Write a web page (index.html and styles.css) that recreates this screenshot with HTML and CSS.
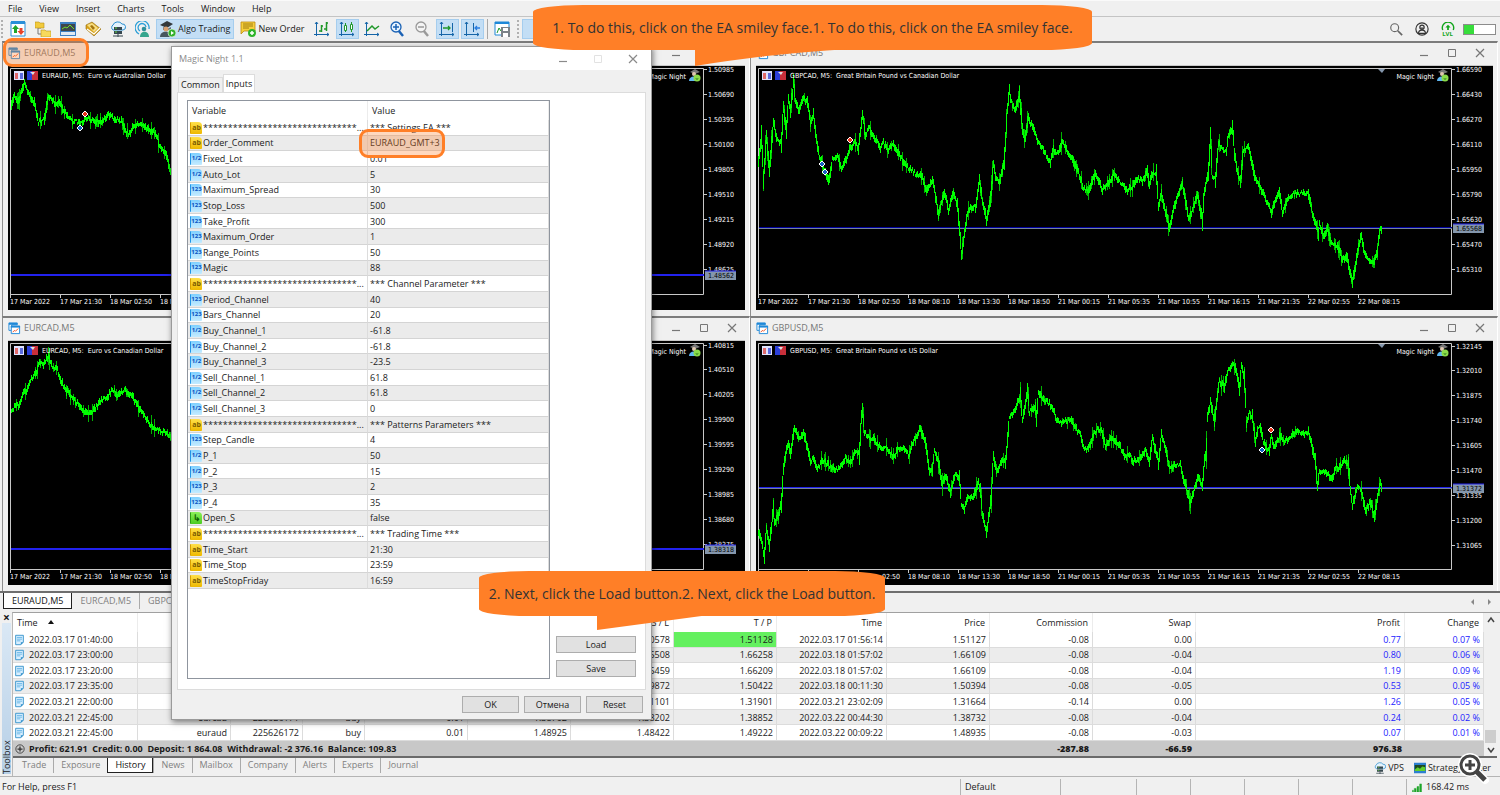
FILE: index.html
```html
<!DOCTYPE html>
<html lang="en">
<head>
    <meta charset="UTF-8">
    <meta name="viewport" content="width=device-width, initial-scale=1.0">
    <title>Magic Night 1.1</title>
    <link rel="stylesheet" href="styles.css">
</head>
<body>
    <!-- Shared icons -->
    <svg class="sprite" aria-hidden="true">
        <symbol id="i-window" viewBox="0 0 14 14">
            <path d="M1 1h9v2H4v6H1z" fill="#fff" stroke="#1e88d8"/><path d="M1 1h9v2H1z" fill="#1e88d8"/>
            <path d="M3.500 4.500h9v8h-9z" fill="#fff" stroke="#1e88d8"/><path d="M3 4h10v2H3z" fill="#1e88d8"/>
            <path d="M5 11l2-2 1 1 3-3" fill="none" stroke="#f04a1a"/>
        </symbol>
        <symbol id="i-market" viewBox="0 0 16 16">
            <path d="M1 1h14v14H1z" fill="#fff" stroke="#2a8fd8"/><path d="M1 0h14v3H1z" fill="#2a8fd8"/>
            <path d="M5.500 4l3.500 4H7v4H4V8H2z" fill="#1fa52a"/><path d="M11 14l-3.500-4h2V7h3v3h2z" fill="#e8432a"/>
        </symbol>
        <symbol id="i-folders" viewBox="0 0 16 16">
            <path d="M3 6v7h4M3 7h3" fill="none" stroke="#777"/>
            <path d="M0 1h4l1 1h4v5H0z" fill="#f2cb3c" stroke="#b8901a" stroke-width=".6"/>
            <path d="M6 9h4l1 1h5v6H6z" fill="#f7d95c" stroke="#b8901a" stroke-width=".6"/>
        </symbol>
        <symbol id="i-terminal" viewBox="0 0 16 16">
            <path d="M0 1h16v14H0z" fill="#3c80c4"/><path d="M1 3h14v7H1z" fill="#3e464c"/>
            <path d="M2 8l3-2 2 1 3-3 4 4" fill="none" stroke="#6fdc2a"/><path d="M1 11h14v3H1z" fill="#dfe9f2"/>
        </symbol>
        <symbol id="i-strategy" viewBox="0 0 16 16">
            <path d="M0 1h16v14H0z" fill="#2d7fd0"/><path d="M1 4h14v8H1z" fill="#1d4a20"/>
            <path d="M1 10l4-3 3 2 3-3 4 1v5H1z" fill="#5fd02a"/>
        </symbol>
        <symbol id="i-tester" viewBox="0 0 16 16">
            <path d="M1 4l6-3 5 4 4 3-7 7L1 8z" fill="#d7a21c" stroke="#94690c" stroke-width=".6"/>
            <path d="M2 4l5-2 6 5-4 4z" fill="#f7de82"/><path d="M5 5l2-1 3 3-2 2z" fill="#a5740d"/>
            <path d="M2 8l7 5 6-6" fill="none" stroke="#fff" stroke-width="1.200"/>
        </symbol>
        <symbol id="i-cloud" viewBox="0 0 16 16">
            <path d="M3 9a3 3 0 0 1 0-5 5 4.500 0 0 1 9-1 3 3 0 0 1 1 6z" fill="#e4f3fd" stroke="#2b8fd0"/>
            <path d="M4 6h8v3H4zM4 10h8v3H4z" fill="#36474f"/><path d="M8 13v3M3 15h10" stroke="#36474f"/>
            <path d="M5 7h2M5 11h2" stroke="#64d641"/>
        </symbol>
        <symbol id="i-signal" viewBox="0 0 16 16">
            <path d="M4 13A7 7 0 1 1 14 8M5 10a4 4 0 1 1 6-4" fill="none" stroke="#2a9fd8" stroke-width="1.300"/>
            <circle cx="9" cy="8" r="2.300" fill="#2f8f9a"/><path d="M5 16c0-7 9-7 9 0z" fill="#36a68d"/>
        </symbol>
        <symbol id="i-algo" viewBox="0 0 16 16">
            <path d="M0 4l7-4 6 3-6 4z" fill="#33383b"/><path d="M3 6l4 2 4-2v3H3z" fill="#667078"/>
            <circle cx="6" cy="8" r="2.500" fill="#d9a071"/><path d="M0 16c0-7 11-7 12 0z" fill="#46565f"/>
            <circle cx="12" cy="12" r="4" fill="#32b02d" stroke="#fff" stroke-width=".6"/><path d="M11 10v4l3-2z" fill="#fff"/>
        </symbol>
        <symbol id="i-order" viewBox="0 0 16 16">
            <path d="M1 1h14v9H4l-3 3z" fill="#f6ce3a" stroke="#bb8b12" stroke-width=".8"/>
            <path d="M3 3h10M3 5h10M3 7h6" stroke="#8d6a08" stroke-width=".8"/>
            <circle cx="12" cy="12" r="4" fill="#2eb52b"/><path d="M12 10v4M10 12h4" stroke="#fff" stroke-width="1.500"/>
        </symbol>
        <symbol id="i-bars" viewBox="0 0 16 16">
            <path d="M2.500 1v14M0 13.500h15M1 3l1.500-2L4 3M13 12l2 1.500-2 1.500" fill="none" stroke="#1565a8"/>
            <path d="M7.500 4v7M5 10h2M7 5h2M12.500 1v9M10 8h2M12 2h2" fill="none" stroke="#20982a" stroke-width="1.500"/>
        </symbol>
        <symbol id="i-candles" viewBox="0 0 16 16">
            <path d="M2.500 1v14M0 13.500h15M1 3l1.500-2L4 3M13 12l2 1.500-2 1.500" fill="none" stroke="#1565a8"/>
            <path d="M5.500 4.500h2v5h-2zM11.500 3.500h2v5h-2zM6.500 2v2M6.500 10v1M12.500 1v2M12.500 9v2" fill="#fff" stroke="#20982a"/>
        </symbol>
        <symbol id="i-line" viewBox="0 0 16 16">
            <path d="M2.500 1v14M0 13.500h15M1 3l1.500-2L4 3M13 12l2 1.500-2 1.500" fill="none" stroke="#1565a8"/>
            <path d="M3 10l5-5 3 3 4-3" fill="none" stroke="#20982a" stroke-width="1.500"/>
        </symbol>
        <symbol id="i-zoomin" viewBox="0 0 16 16">
            <path d="M9 9l5 6" stroke="#1b62b5" stroke-width="2.500"/><circle cx="7" cy="6" r="5" fill="#e8f4ff" stroke="#1b62b5" stroke-width="1.300"/>
            <path d="M7 3v6M4 6h6" stroke="#1b62b5" stroke-width="1.500"/>
        </symbol>
        <symbol id="i-zoomout" viewBox="0 0 16 16">
            <path d="M9 9l5 6" stroke="#999" stroke-width="2.500"/><circle cx="7" cy="6" r="5" fill="#f4f4f4" stroke="#999" stroke-width="1.300"/>
            <path d="M4 6h6" stroke="#999" stroke-width="1.500"/>
        </symbol>
        <symbol id="i-scroll" viewBox="0 0 16 16">
            <path d="M2.500 1v14M0 13.500h15M1 3l1.500-2L4 3M13 12l2 1.500-2 1.500" fill="none" stroke="#1565a8"/>
            <path d="M4 7h7M9 5l2 2-2 2" fill="none" stroke="#20982a" stroke-width="1.300"/><path d="M13.500 2v9" stroke="#1565a8"/>
        </symbol>
        <symbol id="i-shift" viewBox="0 0 16 16">
            <path d="M2.500 1v14M0 13.500h15M1 3l1.500-2L4 3M13 12l2 1.500-2 1.500M9.500 2v9" fill="none" stroke="#1565a8"/>
            <path d="M16 7h-5M13 5l-2 2 2 2" fill="none" stroke="#2a7de0" stroke-width="1.300"/>
        </symbol>
        <symbol id="i-template" viewBox="0 0 16 16">
            <path d="M1 1h14v13H1z" fill="#fff" stroke="#1e88d8"/><path d="M1 1h14v2H1z" fill="#1e88d8"/>
            <path d="M3 12l2-5 2 3 2-4" fill="none" stroke="#20982a"/><path d="M7 6h9v10H7z" fill="#7b8288"/><path d="M9 7h5v3H9zM9 12h5v4H9z" fill="#fff"/>
        </symbol>
        <symbol id="i-search" viewBox="0 0 16 16">
            <circle cx="6.500" cy="6.500" r="4.500" fill="none" stroke="#666" stroke-width="1.300"/><path d="M10 10l5 5" stroke="#666" stroke-width="2"/>
        </symbol>
        <symbol id="i-user" viewBox="0 0 16 16">
            <circle cx="8" cy="8" r="7" fill="none" stroke="#333" stroke-width="1.300"/><circle cx="8" cy="6" r="2.500" fill="none" stroke="#333" stroke-width="1.300"/>
            <path d="M4 13c0-5 8-5 8 0zM6 7h4" fill="none" stroke="#333" stroke-width="1.300"/>
        </symbol>
        <symbol id="i-level" viewBox="0 0 16 10">
            <path d="M2 9a6.500 6.500 0 1 1 12 0" fill="none" stroke="#12a51c" stroke-width="1.600"/><path d="M8 3l3 3H9v3H7V6H5z" fill="#12a51c"/>
        </symbol>
        <symbol id="i-doc" viewBox="0 0 12 14">
            <path d="M1.500 1.500h9v8l-3 3h-6z" fill="#d9efff" stroke="#2a8cc8"/><path d="M3 4h6M3 6h6M3 8h4" stroke="#5db1e4"/><path d="M7.500 12.500v-3h3z" fill="#2a8cc8"/>
        </symbol>
        <symbol id="i-min" viewBox="0 0 10 10"><path d="M1 7.500h8" stroke="currentColor" stroke-width="1.200"/></symbol>
        <symbol id="i-max" viewBox="0 0 10 10"><path d="M1.500 1.500h7v7h-7z" fill="none" stroke="currentColor"/></symbol>
        <symbol id="i-close" viewBox="0 0 10 10"><path d="M1 1l8 8M9 1L1 9" stroke="currentColor" stroke-width="1.200"/></symbol>
        <symbol id="i-up" viewBox="0 0 10 10"><path d="M2 7l3-4 3 4" fill="none" stroke="#444" stroke-width="1.500"/></symbol>
        <symbol id="i-down" viewBox="0 0 10 10"><path d="M2 3l3 4 3-4" fill="none" stroke="#444" stroke-width="1.500"/></symbol>
    </svg>

    <!-- Menu -->
    <nav class="menu">
        <a href="#">File</a><a href="#">View</a><a href="#">Insert</a><a href="#">Charts</a><a href="#">Tools</a><a href="#">Window</a><a href="#">Help</a>
    </nav>

    <!-- Toolbar -->
    <div class="toolbar">
        <span class="grip"></span>
        <button class="tool" aria-label="Market Watch"><svg><use href="#i-market"/></svg></button>
        <button class="tool" aria-label="Navigator"><svg><use href="#i-folders"/></svg></button>
        <button class="tool" aria-label="Toolbox"><svg><use href="#i-terminal"/></svg></button>
        <button class="tool" aria-label="Market"><svg><use href="#i-tester"/></svg></button>
        <button class="tool" aria-label="Virtual Hosting"><svg><use href="#i-cloud"/></svg></button>
        <button class="tool" aria-label="Signals"><svg><use href="#i-signal"/></svg></button>
        <button class="tool wide on"><svg><use href="#i-algo"/></svg>Algo Trading</button>
        <button class="tool wide"><svg><use href="#i-order"/></svg>New Order</button>
        <button class="tool" aria-label="Bar chart"><svg><use href="#i-bars"/></svg></button>
        <button class="tool on" aria-label="Candlesticks"><svg><use href="#i-candles"/></svg></button>
        <button class="tool" aria-label="Line chart"><svg><use href="#i-line"/></svg></button>
        <button class="tool" aria-label="Zoom in"><svg><use href="#i-zoomin"/></svg></button>
        <button class="tool" aria-label="Zoom out"><svg><use href="#i-zoomout"/></svg></button>
        <button class="tool on" aria-label="Auto scroll"><svg><use href="#i-scroll"/></svg></button>
        <button class="tool on" aria-label="Chart shift"><svg><use href="#i-shift"/></svg></button>
        <span class="divider"></span>
        <button class="tool" aria-label="Templates"><svg><use href="#i-template"/></svg></button>
        <span class="grip"></span>
        <button class="tool on" aria-label="Cursor"></button>
        <div class="tools-right">
            <button class="tool" aria-label="Search"><svg><use href="#i-search"/></svg></button>
            <button class="tool" aria-label="Account"><svg><use href="#i-user"/></svg></button>
            <button class="tool level"><svg><use href="#i-level"/></svg>LVL</button>
            <span class="battery"><i></i></span>
        </div>
    </div>

    <!-- Chart windows -->
    <main class="charts" id="charts"></main>

    <div class="chart-tabs">
        <a href="#" class="active">EURAUD,M5</a><a href="#">EURCAD,M5</a><a href="#">GBPCAD,M5</a><a href="#">GBPUSD,M5</a>
        <span class="tab-arrows"><i class="prev"></i><i class="next"></i></span>
    </div>

    <!-- Toolbox -->
    <section class="toolbox">
        <div class="toolbox-side">
            <button aria-label="Close toolbox">×</button>
            <span>Toolbox</span>
        </div>
        <div class="toolbox-main">
            <div class="history">
                <div class="history-body">
                    <table class="deals">
                        <colgroup>
                            <col class="w-time"><col class="w-symbol"><col class="w-ticket"><col class="w-type"><col class="w-num"><col class="w-num"><col class="w-num"><col class="w-num"><col class="w-close"><col class="w-num"><col class="w-num"><col class="w-num"><col><col class="w-change">
                        </colgroup>
                        <thead>
                            <tr><th>Time <i class="sort"></i></th><th>Symbol</th><th>Ticket</th><th>Type</th><th>Volume</th><th>Price</th><th>S / L</th><th>T / P</th><th>Time</th><th>Price</th><th>Commission</th><th>Swap</th><th>Profit</th><th>Change</th></tr>
                        </thead>
                        <tbody id="deals"></tbody>
                    </table>
                    <div class="summary">
                        <svg viewBox="0 0 12 12"><circle cx="6" cy="6" r="5" fill="none" stroke="#333"/><path d="M6 3v6M3 6h6" stroke="#333" stroke-width="1.500"/></svg>
                        <span class="totals">Profit: 621.91&nbsp; Credit: 0.00&nbsp; Deposit: 1 864.08&nbsp; Withdrawal: -2 376.16&nbsp; Balance: 109.83</span>
                        <b class="sum-num">-287.88</b><b class="sum-num">-66.59</b><b class="sum-profit">976.38</b>
                    </div>
                </div>
                <div class="scrollbar"><svg><use href="#i-up"/></svg><i></i><svg><use href="#i-down"/></svg></div>
            </div>
            <div class="toolbox-tabs">
                <a href="#">Trade</a><a href="#">Exposure</a><a href="#" class="active">History</a><a href="#">News</a><a href="#">Mailbox</a><a href="#">Company</a><a href="#">Alerts</a><a href="#">Experts</a><a href="#">Journal</a>
                <div class="toolbox-links">
                    <a href="#"><svg><use href="#i-cloud"/></svg>VPS</a>
                    <a href="#"><svg><use href="#i-strategy"/></svg>Strategy Tester</a>
                </div>
            </div>
        </div>
    </section>

    <!-- Status bar -->
    <footer class="status">
        <span class="help">For Help, press F1</span>
        <span class="profile">Default</span>
        <span class="s1"></span><span class="s2"></span><span class="s2"></span><span class="s2"></span><span class="s2"></span><span class="s2"></span>
        <span class="ping"><svg viewBox="0 0 12 10"><path d="M1 10V8h1v2zM3 10V6h2v4zM6 10V4h2v6zM9 10V1h2v9z" fill="#1fa52a" stroke="#1fa52a" stroke-width=".5"/></svg>168.42 ms</span>
    </footer>

    <!-- Expert settings dialog -->
    <div class="dialog" role="dialog" aria-label="Magic Night 1.1">
        <div class="dialog-title">
            <span>Magic Night 1.1</span>
            <svg><use href="#i-min"/></svg><svg class="off"><use href="#i-max"/></svg><svg><use href="#i-close"/></svg>
        </div>
        <div class="dialog-tabs"><button>Common</button><button class="active">Inputs</button></div>
        <div class="panel">
            <div class="inputs-box">
                <table class="inputs">
                    <colgroup><col class="w-var"><col></colgroup>
                    <thead><tr><th>Variable</th><th>Value</th></tr></thead>
                    <tbody id="inputs"></tbody>
                </table>
            </div>
            <div class="side-buttons"><button>Load</button><button>Save</button></div>
        </div>
        <div class="dialog-buttons"><button>OK</button><button>Отмена</button><button>Reset</button></div>
    </div>

    <!-- Marks and hints -->
    <div class="mark mark-title"></div>
    <div class="mark mark-value"></div>
    <div class="hint hint-first">1. To do this, click on the EA smiley face.1. To do this, click on the EA smiley face.
        <svg viewBox="0 0 154 17"><path d="M0 0h154C100 3 50 9 0 17z"/></svg>
    </div>
    <div class="hint hint-second">2. Next, click the Load button.2. Next, click the Load button.
        <svg viewBox="0 0 112 15"><path d="M0 0h112L0 15z"/></svg>
    </div>
    <button class="magnify" aria-label="Enlarge">
        <svg viewBox="0 0 34 34"><path d="M20 20l9 9" stroke="#fff" stroke-width="8" stroke-linecap="round"/><circle cx="14" cy="14" r="9" fill="#fff" stroke="#fff" stroke-width="6"/><path d="M20 20l9 9" stroke="#444" stroke-width="5"/><circle cx="14" cy="14" r="9" fill="#fff" stroke="#444" stroke-width="3"/><path d="M14 9v10M9 14h10" stroke="#444" stroke-width="3"/></svg>
    </button>

    <script src="script.js"></script>
</body>
</html>
```

FILE: styles.css
```css
* {
    box-sizing: border-box;
}

body {
    margin: 0;
    min-height: 100vh;
    display: flex;
    flex-direction: column;
    background: #f0f0f0;
    color: #1a1a1a;
    font-family: "Open Sans", "Noto Sans", sans-serif;
    font-size: 9px;
    line-height: 12px;
    position: relative;
    overflow: hidden;
}

a {
    color: inherit;
    text-decoration: none;
}

button {
    font: inherit;
    color: inherit;
    padding: 0;
    border: 0;
    background: none;
}

.sprite {
    position: absolute;
    width: 0;
    height: 0;
}

/* Menu and toolbar */
.menu {
    display: flex;
    align-items: center;
    gap: 17px;
    height: 17px;
    padding-left: 8px;
    border-top: 1px solid #fafafa;
    border-bottom: 1px solid #c4c4c4;
}

.toolbar {
    display: flex;
    align-items: center;
    gap: 3px;
    height: 24px;
    padding: 0 4px 0 1px;
}

.tool {
    display: flex;
    align-items: center;
    justify-content: center;
    flex: none;
    width: 23px;
    height: 20px;
    gap: 2px;
    white-space: nowrap;
}

.tool + .tool {
    margin-left: -1px;
}

.tool svg {
    width: 16px;
    height: 16px;
    flex: none;
}

.tool.wide {
    width: auto;
    padding: 0 4px;
}

.tool.on {
    background: #c3def5;
    outline: 1px solid #a5cdee;
    outline-offset: -1px;
}

.grip {
    width: 2px;
    height: 18px;
    border-left: 2px dotted #b0b0b0;
}

.divider {
    width: 1px;
    height: 20px;
    background: #a8a8a8;
}

.tools-right {
    display: flex;
    align-items: center;
    gap: 4px;
    margin-left: auto;
}

.tools-right svg {
    width: 14px;
    height: 14px;
}

.level {
    flex-direction: column;
    gap: 0;
    color: #12a51c;
    font-size: 6px;
    font-weight: bold;
    line-height: 6px;
}

.level svg {
    height: 9px;
}

.battery {
    width: 33px;
    height: 11px;
    border: 1px solid #8c8c8c;
    background: #fff;
    display: flex;
}

.battery i {
    width: 10px;
    background: #37dd3b;
}

/* Chart windows */
.charts {
    display: grid;
    grid-template-columns: 1fr 1fr;
    padding: 0 2px;
    border-bottom: 2px solid #6e6e6e;
}

.chart-window {
    border-top: 2px solid #7c7c7c;
    border-left: 1px solid #8e8e8e;
    border-right: 1px solid #fff;
    padding: 0 4px 6px 5px;
}

.chart-title {
    display: flex;
    align-items: center;
    gap: 3px;
    height: 22px;
    padding: 0 8px 2px 0;
    color: #777;
}

.chart-title svg {
    width: 13px;
    height: 13px;
}

.chart-title .caption {
    margin-right: auto;
}

.chart-title .ctl {
    width: 10px;
    height: 10px;
    margin-left: 15px;
}

.chart {
    display: block;
    width: 100%;
    background: #000;
    font-family: "DejaVu Sans Condensed", "DejaVu Sans", sans-serif;
    font-size: 7px;
    fill: #fff;
}

.chart .axis {
    fill: none;
    stroke: #c8c8c8;
}

.chart .wick {
    fill: none;
    stroke: #00b400;
}

.chart .price {
    fill: none;
    stroke: #00ff00;
}

.chart .tag {
    fill: #8496ac;
}

.chart .tag-text {
    fill: #000;
}

.chart-tabs {
    display: flex;
    height: 19px;
    padding-left: 3px;
    color: #808080;
}

.chart-tabs a {
    height: 16px;
    line-height: 15px;
    padding: 0 8px;
}

.chart-tabs a + a {
    border-right: 1px solid #aaa;
}

.chart-tabs .active {
    background: #fff;
    color: #111;
    border: 1px solid #222;
    border-top: 0;
}

.tab-arrows {
    display: flex;
    gap: 14px;
    margin: 6px 9px 0 auto;
}

.tab-arrows i {
    width: 3px;
    height: 6px;
    border: 3px solid transparent;
    border-width: 3px 0;
}

.tab-arrows .prev {
    border-right: 3px solid #888;
}

.tab-arrows .next {
    border-left: 3px solid #888;
}

/* Toolbox */
.toolbox {
    display: flex;
    height: 164px;
}

.toolbox-side {
    display: flex;
    flex-direction: column;
    align-items: center;
    width: 12px;
    padding-left: 1px;
}

.toolbox-side button {
    height: 11px;
    font-size: 12px;
    font-weight: bold;
    line-height: 9px;
}

.toolbox-side span {
    flex: 1;
    margin-bottom: 2px;
    width: 9px;
    line-height: 9px;
    writing-mode: vertical-rl;
    transform: rotate(180deg);
    background: linear-gradient(#b6cfe6, #dae8f5);
}

.toolbox-main {
    flex: 1;
    min-width: 0;
    border-top: 1px solid #a0a0a0;
    border-left: 1px solid #b8b8b8;
    padding-right: 3px;
}

.history {
    display: flex;
    border-bottom: 2px solid #6a6a6a;
}

.history-body {
    flex: 1;
    min-width: 0;
}

table {
    border-collapse: separate;
    border-spacing: 0;
    table-layout: fixed;
    width: 100%;
}

.deals {
    height: 128px;
    background: #fff;
}

.deals th,
.deals td {
    padding: 0 3px;
    text-align: right;
    border-right: 1px solid #dcdcdc;
    white-space: nowrap;
    line-height: 12px;
}

.deals th {
    height: 19px;
    padding-right: 4px;
    font-weight: normal;
    border-color: #ececec;
}

.deals th:first-child,
.deals td:first-child {
    text-align: left;
}

.deals th:first-child {
    padding-left: 4px;
}

.deals td {
    padding-top: 1px;
    border-bottom: 1px solid #dcdcdc;
}

.deals tr:nth-child(even) td {
    background: #ececec;
}

.deals td:first-child {
    padding-left: 1px;
}

.deals td svg {
    width: 11px;
    height: 12px;
    margin-right: 4px;
    vertical-align: top;
}

.deals .hit {
    background: #64f05f;
}

.deals .plus {
    color: #2222ff;
}

.sort {
    display: inline-block;
    margin: 0 0 2px 8px;
    border: 3px solid transparent;
    border-top: 0;
    border-bottom: 4px solid #111;
}

.w-time { width: 125px; }
.w-symbol { width: 93px; }
.w-ticket { width: 72px; }
.w-type { width: 62px; }
.w-num { width: 103px; }
.w-close { width: 110px; }
.w-change { width: 79px; }
.w-var { width: 180px; }

.summary {
    display: flex;
    align-items: center;
    height: 15px;
    padding: 0 82px 0 2px;
    background: #c8c8c8;
    font-weight: bold;
}

.summary svg {
    width: 10px;
    height: 10px;
    margin-right: 4px;
}

.totals {
    flex: 1;
}

.sum-num {
    width: 103px;
    text-align: right;
}

.sum-profit {
    width: 210px;
    text-align: right;
}

.scrollbar {
    display: flex;
    flex-direction: column;
    align-items: center;
    width: 13px;
    padding: 2px 0 1px;
}

.scrollbar svg {
    width: 10px;
    height: 10px;
}

.scrollbar i {
    width: 11px;
    height: 13px;
    margin: auto 0 2px;
    background: #cdcdcd;
}

.toolbox-tabs {
    display: flex;
    height: 18px;
    padding-left: 2px;
    color: #808080;
}

.toolbox-tabs > a {
    height: 15px;
    padding: 0 7px;
    line-height: 14px;
}

.toolbox-tabs > a + a {
    border-left: 1px solid #aaa;
}

.toolbox-tabs .active {
    background: #fff;
    color: #111;
    border: 1px solid #222;
    border-top: 0;
}

.toolbox-links {
    display: flex;
    gap: 10px;
    margin-left: auto;
    padding: 1px 6px 0 0;
    color: #222;
}

.toolbox-links a {
    display: flex;
    align-items: center;
    gap: 2px;
}

.toolbox-links svg {
    width: 12px;
    height: 12px;
}

/* Status bar */
.status {
    display: flex;
    align-items: center;
    height: 19px;
    padding: 2px 0 0 2px;
    border-top: 1px solid #b4b4b4;
}

.status span + span {
    height: 16px;
    line-height: 16px;
    padding-left: 4px;
    border-left: 1px solid #b4b4b4;
}

.help {
    flex: 1;
}

.profile { width: 100px; }
.s1 { width: 76px; }
.s2 { width: 54px; }

.ping {
    width: 94px;
}

.ping svg {
    width: 12px;
    height: 9px;
    margin-right: 3px;
    vertical-align: middle;
}

/* Dialog */
.dialog {
    position: absolute;
    left: 171px;
    top: 46px;
    width: 481px;
    background: #f0f0f0;
    border: 1px solid #9a9a9a;
    box-shadow: 1px 2px 6px rgba(0, 0, 0, 0.5);
}

.dialog-title {
    display: flex;
    align-items: center;
    height: 23px;
    padding: 0 13px 0 7px;
    background: #fff;
    color: #8a8a8a;
    font-size: 9px;
}

.dialog-title span {
    margin-right: auto;
}

.dialog-title svg {
    width: 10px;
    height: 10px;
    margin-left: 25px;
}

.dialog-title .off {
    color: #e2e2e2;
}

.dialog-tabs {
    display: flex;
    align-items: flex-end;
    height: 22px;
    padding-left: 6px;
}

.dialog-tabs button {
    height: 15px;
    padding: 0 2px;
    border: 1px solid #dcdcdc;
    border-bottom: 0;
}

.dialog-tabs .active {
    height: 18px;
    background: #fff;
}

.panel {
    display: flex;
    margin: 0 5px;
    padding: 7px 9px 10px;
    background: #fff;
    border: 1px solid #dcdcdc;
}

.inputs-box {
    width: 363px;
    height: 579px;
    border: 1px solid #8f959e;
}

.inputs {
    height: 488px;
}

.inputs th,
.inputs td {
    padding: 0 2px;
    text-align: left;
    white-space: nowrap;
    overflow: hidden;
    line-height: 12px;
    border-right: 1px solid #dcdcdc;
}

.inputs th {
    height: 19px;
    padding-left: 4px;
    font-weight: normal;
    border-color: #ececec;
}

.inputs td {
    padding-top: 1px;
    border-bottom: 1px solid #d4d4d4;
}

.inputs td:first-child {
    padding-right: 0;
}

.inputs tr:nth-child(even) td {
    background: #ebebeb;
}

.kind {
    display: inline-block;
    width: 12px;
    height: 12px;
    margin-right: 1px;
    border-radius: 1px 4px 1px 1px;
    background: linear-gradient(#7fd0ff, #c4ebff);
    border-left: 1px solid #2196e8;
    color: #0a50c0;
    font-size: 6px;
    font-weight: bold;
    line-height: 11px;
    text-align: center;
    vertical-align: top;
    overflow: hidden;
}

.kind.text {
    background: linear-gradient(#ffe04a, #eeb800);
    border-color: #d9a000;
    color: #7a5c00;
    font-size: 7px;
}

.kind.bool {
    background: linear-gradient(#8cf05a, #4ccc22);
    border-color: #2ca010;
    color: #0b5c00;
    font-size: 9px;
}

.side-buttons {
    display: flex;
    flex-direction: column;
    justify-content: flex-end;
    flex: 1;
    gap: 7px;
    margin: 0 0 2px 6px;
}

.side-buttons button,
.dialog-buttons button {
    height: 17px;
    background: #e1e1e1;
    border: 1px solid #adadad;
}

.dialog-buttons {
    display: flex;
    justify-content: flex-end;
    gap: 5px;
    padding: 6px 8px 6px;
}

.dialog-buttons button {
    width: 57px;
}

/* Marks and hints */
.mark {
    position: absolute;
    border: 3px solid #ff7f27;
    border-radius: 9px;
    background: rgba(255, 127, 39, 0.3);
}

.mark-title {
    left: 3px;
    top: 38px;
    width: 86px;
    height: 29px;
}

.mark-value {
    left: 359px;
    top: 129px;
    width: 86px;
    height: 29px;
}

.hint {
    position: absolute;
    display: flex;
    align-items: center;
    justify-content: center;
    height: 45px;
    border-radius: 50px / 7px;
    background: #ff7f27;
    color: #333;
    font-size: 14px;
    white-space: nowrap;
}

.hint svg {
    position: absolute;
    top: 44px;
    fill: #ff7f27;
}

.hint-first {
    left: 533px;
    top: 5px;
    width: 559px;
}

.hint-first svg {
    left: 162px;
    width: 154px;
}

.hint-second {
    left: 479px;
    top: 571px;
    width: 406px;
}

.hint-second svg {
    left: 118px;
    width: 112px;
}

.magnify {
    position: absolute;
    right: 10px;
    bottom: 10px;
    width: 34px;
    height: 34px;
}
```

FILE: script.js
```js
// Each chart: title, price scale, last price and rough path of the quotes
const times = ['17 Mar 2022', '17 Mar 21:30', '18 Mar 02:50', '18 Mar 08:10', '18 Mar 13:30', '18 Mar 18:50', '21 Mar 00:15', '21 Mar 05:35', '21 Mar 10:55', '21 Mar 16:15', '21 Mar 21:35', '22 Mar 02:55', '22 Mar 08:15'];

const charts = [
    {
        name: 'EURAUD', text: 'Euro vs Australian Dollar', first: 4, tag: '1.48562', tagY: 210, dates: 4,
        prices: ['1.50985', '1.50690', '1.50395', '1.50100', '1.49805', '1.49510', '1.49215', '1.48920', '1.48625'],
        deals: [[72, 63, 'buy'], [77, 49, 'sell']],
        path: '3,42 6,30 10,37 16,18 20,28 26,38 30,57 36,55 40,30 46,38 51,38 56,47 63,55 72,58 78,54 84,55 91,58 100,50 108,55 113,55 118,67 122,70 125,60 131,60 140,65 147,67 151,80 158,90 163,112 166,102'
    },
    {
        name: 'GBPCAD', text: 'Great Britain Pound vs Canadian Dollar', first: 4, tag: '1.65568', tagY: 163, dates: 13,
        prices: ['1.66590', '1.66430', '1.66270', '1.66110', '1.65950', '1.65790', '1.65630', '1.65470', '1.65310'],
        deals: [[66, 99, 'buy'], [69, 107, 'buy'], [94, 75, 'sell']],
        path: '2,97 5,72 7,113 10,72 13,105 17,57 21,75 25,78 27,42 30,65 32,35 34,47 37,18 39,35 42,45 47,33 51,37 54,57 57,50 60,75 63,92 66,98 69,107 72,117 76,95 81,92 85,105 91,92 94,82 99,77 102,83 106,50 109,70 113,63 119,75 124,83 127,78 131,85 137,80 144,92 152,103 161,110 164,108 170,125 176,115 182,148 188,127 192,145 197,127 201,140 205,188 207,175 211,148 215,142 219,143 223,115 226,135 230,155 234,135 237,100 240,115 243,118 248,95 251,42 253,25 255,38 259,45 263,30 266,62 268,75 272,53 277,65 282,78 287,85 294,98 297,85 302,88 306,77 311,87 316,93 322,108 327,123 332,127 339,108 346,125 352,117 358,108 362,115 367,120 371,125 376,122 382,113 386,117 391,105 393,122 396,108 400,110 402,142 405,128 408,142 413,163 417,145 421,130 426,120 429,135 432,155 437,142 441,130 446,155 448,125 452,108 454,75 456,112 459,115 462,78 466,85 470,85 472,72 476,62 478,88 481,108 484,115 487,85 492,82 496,98 499,115 506,127 511,138 515,148 519,135 523,128 526,148 531,135 537,129 546,128 552,128 556,148 562,167 563,158 568,172 571,162 575,178 581,180 586,195 590,190 593,205 596,217 599,202 602,182 605,170 608,188 612,195 618,198 621,185 624,162 626,168'
    },
    {
        name: 'EURCAD', text: 'Euro vs Canadian Dollar', first: 5, tag: '1.38318', tagY: 209, dates: 4,
        prices: ['1.40815', '1.40510', '1.40205', '1.39900', '1.39595', '1.39290', '1.38985', '1.38680', '1.38375'],
        deals: [],
        path: '3,72 8,64 11,66 14,55 18,50 22,40 27,34 31,22 35,24 40,16 44,26 48,28 53,42 58,50 63,58 68,62 74,70 80,75 86,70 93,60 98,58 104,50 110,56 116,50 123,54 128,64 133,72 140,82 148,90 156,92 165,98'
    },
    {
        name: 'GBPUSD', text: 'Great Britain Pound vs US Dollar', first: 6, tag: '1.31372', tagY: 148, dates: 13,
        prices: ['1.32145', '1.32010', '1.31875', '1.31740', '1.31605', '1.31470', '1.31335', '1.31200', '1.31065'],
        deals: [[506, 110, 'buy'], [515, 90, 'sell']],
        path: '2,192 5,202 8,217 10,188 13,205 17,168 18,182 22,175 25,162 27,128 29,115 32,102 34,115 38,87 43,100 47,92 51,108 54,122 57,118 61,130 66,120 72,125 77,129 84,128 89,118 94,122 99,112 103,112 105,78 106,70 108,92 114,100 117,98 124,108 131,108 137,118 142,108 147,107 152,115 157,102 164,88 169,103 173,132 176,128 178,112 182,122 186,145 189,135 194,153 199,133 203,140 205,165 208,168 212,155 217,158 222,142 224,152 226,175 230,192 233,172 235,155 237,115 240,132 246,118 249,122 251,102 253,78 259,70 264,55 266,78 269,65 271,52 273,72 279,68 280,78 282,53 289,60 296,67 301,82 306,82 314,80 319,88 324,95 328,110 332,108 337,95 342,88 346,93 349,105 356,98 364,107 369,117 372,113 377,122 384,117 389,110 393,122 396,98 402,122 405,95 409,108 413,128 419,125 424,125 427,138 431,152 434,163 437,152 442,137 446,145 448,122 450,108 451,78 454,62 458,82 461,55 463,42 468,47 471,32 476,25 479,27 483,48 485,25 488,38 490,82 493,72 496,78 499,102 502,87 504,88 507,102 511,110 513,110 515,97 518,107 524,95 527,102 534,97 541,92 547,95 552,92 556,108 559,122 561,148 563,132 569,132 576,138 580,125 582,130 587,120 592,125 594,152 596,165 601,148 605,150 609,172 614,162 618,177 621,158 624,143 626,152'
    }
];

// Repeatable noise, so the bars look the same on every load
let seed = 7;
function rand() {
    seed = (seed * 16807) % 2147483647;
    return seed / 2147483647;
}

function bars(path) {
    const pts = path.split(' ').map(p => p.split(',').map(Number));
    let body = '', wick = '';
    for (let i = 1; i < pts.length; i++) {
        const [x0, y0] = pts[i - 1];
        const [x1, y1] = pts[i];
        for (let x = x0; x < x1; x++) {
            const step = (y1 - y0) / (x1 - x0);
            const y = y0 + step * (x - x0) + (rand() - 0.5) * 4;
            const half = Math.min(Math.abs(step) / 2, 9) + 1 + rand() * 2;
            const tail = half + (rand() > 0.8 ? rand() * 7 : 0);
            body += `M${x + 0.5} ${Math.round(y - half)}V${Math.round(y + half)}`;
            wick += `M${x + 0.5} ${Math.round(y - tail)}V${Math.round(y + tail)}`;
        }
    }
    return `<path class="wick" d="${wick}"/><path class="price" d="${body}"/>`;
}

function drawChart(c) {
    // the scale has a short first step when it does not start at 4
    const priceY = i => (i === 0 ? c.first : 4 + 25 * i + (c.first === 6 ? 1 : 0));
    const labels = c.prices.map((p, i) => `<path class="axis" d="M696 ${priceY(i) + 0.5}h3"/><text x="700" y="${priceY(i) + 3}">${p}</text>`).join('');
    const dates = times.slice(0, c.dates).map((t, i) => `<path class="axis" d="M${2.5 + i * 50} 229v4"/><text x="${2 + i * 50}" y="239">${t}</text>`).join('');
    const deals = c.deals.map(([x, y, kind]) => `<path d="M${x - 3} ${y}l3-3 3 3-3 3z" fill="${kind === 'buy' ? '#1565c0' : '#e8321a'}" stroke="#fff"/>`).join('');
    return `<svg class="chart" viewBox="0 0 737 245">
        <path class="axis" d="M2.500 3.500h693v226h-693zM0 .5h737"/>
        <path d="M3 ${c.tagY - 0.5}h693" stroke="${c.name === 'GBPCAD' ? '#0000a0' : '#2222ee'}"/><path d="M3 ${c.tagY + 0.5}h693" stroke="${c.name.startsWith('EUR') ? '#2222ee' : '#74869c'}"/>
        ${bars(c.path)}${deals}
        <path d="M622 4h7l-3 4z" fill="#8496ac"/>
        <path d="M6 6h10v9H6z" fill="#dfe3ff"/><path d="M7 8h3v6H7z" fill="#e06a6a"/><path d="M12 8h3v6h-3z" fill="#5b6be0"/>
        <path d="M19 6h5v9h-5z" fill="#2b3ed8"/><path d="M24 6h6v9h-6z" fill="#c82f3a"/><path d="M22 7h5l-2 3z" fill="#ddd"/>
        <text x="34" y="13">${c.name}, M5:&#160; ${c.text}</text>
        <text x="678" y="14" text-anchor="end">Magic Night</text>
        <path d="M682 7l5-3 5 3-5 2z" fill="#777"/><circle cx="686" cy="9" r="2" fill="#e0c8b0"/><path d="M681 16c0-6 9-6 9 0z" fill="#5fb5ef"/><circle cx="689" cy="13" r="3.500" fill="#8bdc4a"/><path d="M688 13.500c0 1 2 1 2 0" fill="none" stroke="#176b12"/>
        ${labels}${dates}
        <path class="tag" d="M697 ${c.tagY - 4}h31v9h-31z"/><path d="M697 ${c.tagY - 4}h31" stroke="#2222ee"/>
        <text class="tag-text" x="700" y="${c.tagY + 3}">${c.tag}</text>
    </svg>`;
}

document.getElementById('charts').innerHTML = charts.map(c => `
    <section class="chart-window">
        <div class="chart-title"><svg><use href="#i-window"/></svg><span class="caption">${c.name},M5</span>
            <svg class="ctl"><use href="#i-min"/></svg><svg class="ctl"><use href="#i-max"/></svg><svg class="ctl"><use href="#i-close"/></svg>
        </div>
        ${drawChart(c)}
    </section>`).join('');

// History of deals
const deals = [
    ['2022.03.17 01:40:00', '', '', '', '', '', '1.50578', '1.51128', '2022.03.17 01:56:14', '1.51127', '-0.08', '0.00', '0.77', '0.07 %'],
    ['2022.03.17 23:00:00', '', '', '', '', '', '1.65508', '1.66258', '2022.03.18 01:57:02', '1.66109', '-0.08', '-0.04', '0.80', '0.06 %'],
    ['2022.03.17 23:20:00', '', '', '', '', '', '1.65459', '1.66209', '2022.03.18 01:57:02', '1.66109', '-0.08', '-0.04', '1.19', '0.09 %'],
    ['2022.03.17 23:35:00', '', '', '', '', '', '1.49872', '1.50422', '2022.03.18 00:11:30', '1.50394', '-0.08', '-0.05', '0.53', '0.05 %'],
    ['2022.03.21 22:00:00', '', '', '', '', '', '1.31101', '1.31901', '2022.03.21 23:02:09', '1.31664', '-0.14', '0.00', '1.26', '0.05 %'],
    ['2022.03.21 22:45:00', 'eurcad', '225626171', 'buy', '0.01', '1.38702', '1.38202', '1.38852', '2022.03.22 00:44:30', '1.38732', '-0.08', '-0.04', '0.24', '0.02 %'],
    ['2022.03.21 22:45:00', 'euraud', '225626172', 'buy', '0.01', '1.48925', '1.48422', '1.49222', '2022.03.22 00:09:22', '1.48935', '-0.08', '-0.03', '0.07', '0.01 %']
];

document.getElementById('deals').innerHTML = deals.map((row, r) => '<tr>' + row.map((cell, i) => {
    let cls = i > 11 ? 'plus' : '';
    if (r === 0 && i === 7) cls = 'hit';
    return `<td class="${cls}">${i === 0 ? '<svg><use href="#i-doc"/></svg>' : ''}${cell}</td>`;
}).join('') + '</tr>').join('');

// Expert inputs: kind, variable, value
const stars = '*'.repeat(31) + '...';
const inputs = [
    ['ab', stars, '*** Settings EA ***'], ['ab', 'Order_Comment', 'EURAUD_GMT+3'],
    ['1/2', 'Fixed_Lot', '0.01'], ['1/2', 'Auto_Lot', '5'],
    ['123', 'Maximum_Spread', '30'], ['123', 'Stop_Loss', '500'], ['123', 'Take_Profit', '300'],
    ['123', 'Maximum_Order', '1'], ['123', 'Range_Points', '50'], ['123', 'Magic', '88'],
    ['ab', stars, '*** Channel Parameter ***'],
    ['123', 'Period_Channel', '40'], ['123', 'Bars_Channel', '20'],
    ['1/2', 'Buy_Channel_1', '-61.8'], ['1/2', 'Buy_Channel_2', '-61.8'], ['1/2', 'Buy_Channel_3', '-23.5'],
    ['1/2', 'Sell_Channel_1', '61.8'], ['1/2', 'Sell_Channel_2', '61.8'], ['1/2', 'Sell_Channel_3', '0'],
    ['ab', stars, '*** Patterns Parameters ***'],
    ['123', 'Step_Candle', '4'], ['1/2', 'P_1', '50'], ['1/2', 'P_2', '15'], ['123', 'P_3', '2'], ['123', 'P_4', '35'],
    ['↳', 'Open_S', 'false'],
    ['ab', stars, '*** Trading Time ***'],
    ['ab', 'Time_Start', '21:30'], ['ab', 'Time_Stop', '23:59'], ['ab', 'TimeStopFriday', '16:59']
];
const kinds = { ab: 'text', '↳': 'bool' };

document.getElementById('inputs').innerHTML = inputs.map(([kind, name, value]) =>
    `<tr><td><span class="kind ${kinds[kind] || ''}">${kind}</span>${name}</td><td>${value}</td></tr>`).join('');
```
